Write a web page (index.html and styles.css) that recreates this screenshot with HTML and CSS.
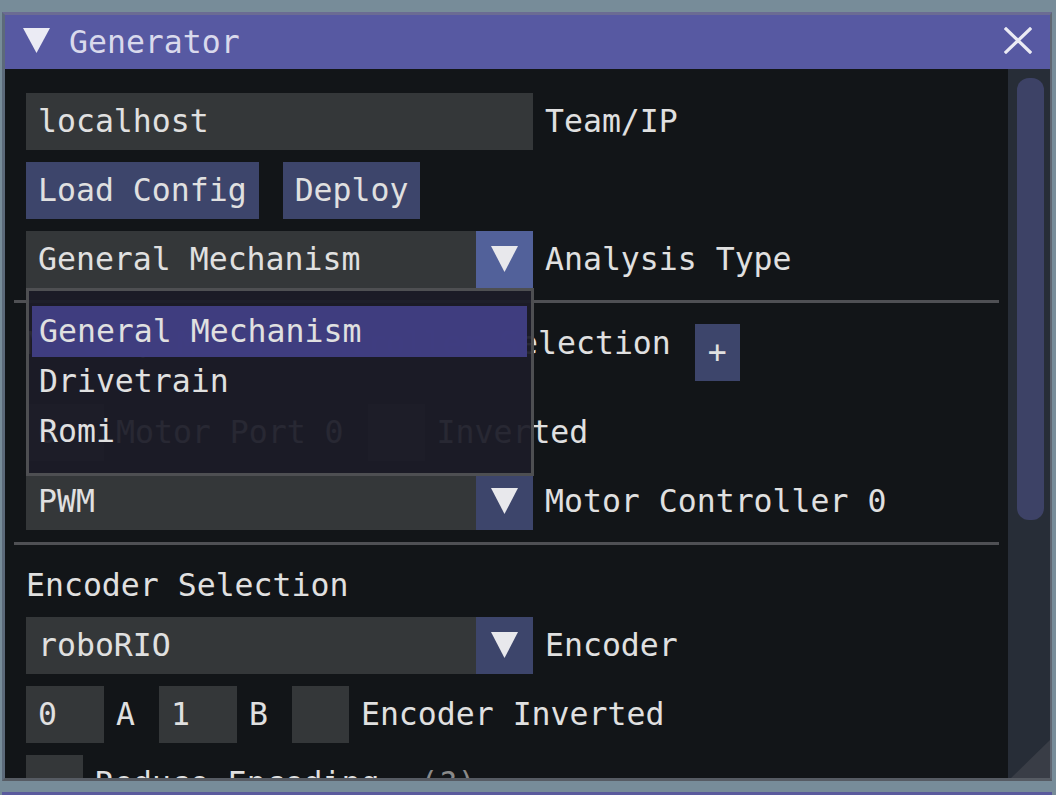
FILE: index.html
```html
<!DOCTYPE html>
<html>
<head>
<meta charset="utf-8">
<link rel="stylesheet" href="styles.css">
</head>
<body>
<div class="page">
  <div class="window">
    <div class="titlebar">
      <svg class="title-arrow" width="27" height="25" viewBox="0 0 27 25"><polygon points="0,0 27,0 13.5,25" fill="#ebebf4"/></svg>
      <span class="title-text">Generator</span>
      <svg class="close" width="28" height="27" viewBox="0 0 28 27"><path d="M2 2 L26 25 M26 2 L2 25" stroke="#ebebf4" stroke-width="3.2" stroke-linecap="square"/></svg>
    </div>
    <div class="body">
      <div class="content">
        <div class="row first">
          <div class="frame wide">localhost</div>
          <span class="label">Team/IP</span>
        </div>
        <div class="row">
          <div class="button">Load Config</div>
          <div class="button gap">Deploy</div>
        </div>
        <div class="row">
          <div class="combo open">
            <div class="combo-value">General Mechanism</div>
            <div class="combo-arrow hovered"><svg width="27" height="27" viewBox="0 0 27 27"><polygon points="0,0 27,0 13.5,26" fill="#e8e8ec"/></svg></div>
            <div class="popup">
              <div class="item selected">General Mechanism</div>
              <div class="item">Drivetrain</div>
              <div class="item">Romi</div>
            </div>
          </div>
          <span class="label">Analysis Type</span>
        </div>
        <div class="separator"></div>
        <div class="header-row">
          <span class="text">Motor / Motor Controller Selection</span>
          <div class="button small gap">+</div>
        </div>
        <div class="row after-header">
          <div class="frame narrow">0</div>
          <span class="label">Motor Port 0</span>
          <div class="checkbox gap"></div>
          <span class="label">Inverted</span>
        </div>
        <div class="row">
          <div class="combo">
            <div class="combo-value">PWM</div>
            <div class="combo-arrow"><svg width="27" height="27" viewBox="0 0 27 27"><polygon points="0,0 27,0 13.5,26" fill="#e8e8ec"/></svg></div>
          </div>
          <span class="label">Motor Controller 0</span>
        </div>
        <div class="separator"></div>
        <div class="section-title">Encoder Selection</div>
        <div class="row">
          <div class="combo">
            <div class="combo-value">roboRIO</div>
            <div class="combo-arrow"><svg width="27" height="27" viewBox="0 0 27 27"><polygon points="0,0 27,0 13.5,26" fill="#e8e8ec"/></svg></div>
          </div>
          <span class="label">Encoder</span>
        </div>
        <div class="row">
          <div class="frame narrow">0</div>
          <span class="label">A</span>
          <div class="frame narrow gap">1</div>
          <span class="label">B</span>
          <div class="checkbox gap"></div>
          <span class="label">Encoder Inverted</span>
        </div>
        <div class="row">
          <div class="checkbox"></div>
          <span class="label">Reduce Encoding</span>
          <span class="label help">(?)</span>
        </div>
      </div>
      <div class="scrollbar"><div class="grab"></div></div>
      <svg class="grip" width="42" height="38" viewBox="0 0 42 38"><polygon points="42,0 42,38 3,38" fill="#393d46"/></svg>
    </div>
  </div>
  <div class="next-window"></div>
</div>
</body>
</html>
```

FILE: styles.css
```css
html, body {
  margin: 0;
  padding: 0;
}
body {
  background: #778c99;
  font-family: "DejaVu Sans Mono", monospace;
  font-size: 31.5px;
  color: #e0e0e0;
  width: 1056px;
  height: 795px;
  overflow: hidden;
}
.page {
  padding: 12px 0 0 2px;
}
.window {
  width: 1050px;
  height: 769px;
  box-sizing: border-box;
  border-style: solid;
  border-width: 3px 2px 3px 3px;
  border-color: #6b6b93 #5f6672 #565b63 #5c6a7a;
  display: flex;
  flex-direction: column;
  position: relative;
  overflow: hidden;
}
.titlebar {
  height: 54px;
  flex: none;
  background: #5759a2;
  display: flex;
  align-items: center;
  padding: 0 18px;
}
.title-arrow {
  margin-top: -3px;
}
.title-text {
  margin-left: 19px;
  line-height: 39px;
  color: #d9d9ec;
  flex: 1;
}
.close {
  margin-top: -3px;
}
.body {
  flex: 1;
  display: flex;
  background: #121518;
  position: relative;
  min-height: 0;
}
.content {
  flex: 1;
  padding: 24px 0 0 21px;
  overflow: hidden;
}
.scrollbar {
  width: 42px;
  flex: none;
  background: #272d37;
  box-sizing: border-box;
  padding: 9px 0 0 9px;
}
.grab {
  width: 27px;
  height: 442px;
  background: #3d4266;
  border-radius: 12px;
}
.grip {
  position: absolute;
  right: 0;
  bottom: 0;
}
.row {
  display: flex;
  align-items: center;
  height: 57px;
  margin-top: 12px;
}
.row.first {
  margin-top: 0;
}
.row.after-header {
  margin-top: 23px;
}
.frame {
  background: #343739;
  height: 57px;
  box-sizing: border-box;
  padding: 0 12px;
  line-height: 39px;
  display: flex;
  align-items: center;
  white-space: pre;
}
.frame.wide {
  width: 507px;
}
.frame.narrow {
  width: 78px;
}
.label {
  margin-left: 12px;
  line-height: 39px;
  white-space: pre;
}
.label.help {
  margin-left: 40px;
  color: #8a8a8a;
}
.gap {
  margin-left: 24px;
}
.button {
  background: #3d456b;
  height: 57px;
  box-sizing: border-box;
  padding: 0 12px;
  line-height: 39px;
  display: flex;
  align-items: center;
  white-space: pre;
}
.button.small {
  width: 45px;
  justify-content: center;
  padding: 0;
}
.checkbox {
  width: 57px;
  height: 57px;
  background: #343739;
  flex: none;
}
.combo {
  width: 507px;
  height: 57px;
  display: flex;
}
.combo.open {
  position: relative;
}
.combo-value {
  flex: 1;
  background: #343739;
  padding: 0 12px;
  line-height: 39px;
  display: flex;
  align-items: center;
  white-space: pre;
}
.combo-arrow {
  width: 57px;
  background: #3d456b;
  display: flex;
  align-items: center;
  justify-content: center;
}
.combo-arrow.hovered {
  background: #52619a;
}
.popup {
  position: absolute;
  top: 100%;
  left: 0;
  width: 508px;
  height: 188px;
  box-sizing: border-box;
  border: 3px solid #4e4f52;
  background: rgba(28, 28, 39, 0.94);
  padding: 15px 4px 0 3px;
}
.item {
  height: 50px;
  box-sizing: border-box;
  padding: 6px 7px 0;
  line-height: 39px;
  white-space: pre;
}
.item.selected {
  height: 51px;
  margin-bottom: -1px;
  background: rgba(66, 63, 134, 0.93);
}
.separator {
  height: 3px;
  margin: 12px 0 0 -12px;
  width: 985px;
  background: #4f5054;
}
.header-row {
  display: flex;
  align-items: flex-start;
  margin-top: 21px;
}
.text {
  line-height: 39px;
  white-space: pre;
}
.section-title {
  margin-top: 21px;
  line-height: 39px;
  white-space: pre;
}
.next-window {
  margin-top: 11px;
  height: 3px;
  width: 1050px;
  background: #5a5a9d;
}
```
